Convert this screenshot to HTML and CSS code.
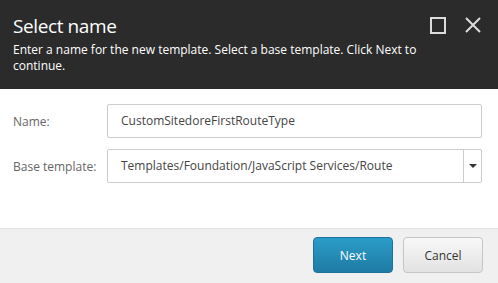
FILE: index.html
```html
<!DOCTYPE html>
<html lang="en">
<head>
    <meta charset="UTF-8">
    <title>Select name</title>
    <link rel="stylesheet" href="styles.css">
</head>
<body>
    <div class="dialog">
        <div class="dialog-header">
            <div class="header-text">
                <h1 class="title">Select name</h1>
                <p class="subtitle">Enter a name for the new template. Select a base template. Click Next to continue.</p>
            </div>
            <div class="header-tools">
                <svg class="tool" width="16" height="17" viewBox="0 0 16 17">
                    <rect x="1" y="1" width="14" height="15" fill="none" stroke="#dcdcdc" stroke-width="2"/>
                </svg>
                <svg class="tool" width="16" height="16" viewBox="0 0 16 16">
                    <path d="M1 1 L15 15 M15 1 L1 15" stroke="#dcdcdc" stroke-width="2"/>
                </svg>
            </div>
        </div>

        <div class="dialog-body">
            <div class="form-row">
                <label class="field-label">Name:</label>
                <div class="field">CustomSitedoreFirstRouteType</div>
            </div>
            <div class="form-row">
                <label class="field-label">Base template:</label>
                <div class="field combo">
                    <span class="combo-text">Templates/Foundation/JavaScript Services/Route</span>
                    <span class="combo-btn"><span class="caret"></span></span>
                </div>
            </div>
        </div>

        <div class="dialog-footer">
            <button class="btn btn-primary">Next</button>
            <button class="btn btn-default">Cancel</button>
        </div>
    </div>
</body>
</html>
```

FILE: styles.css
```css
body {
    margin: 0;
    font-family: 'Open Sans', 'Noto Sans', sans-serif;
    background-color: #fff;
}

.dialog {
    width: 498px;
    height: 283px;
    display: flex;
    flex-direction: column;
}

.dialog-header {
    background-color: #2b2b2b;
    color: #fff;
    height: 89px;
    box-sizing: border-box;
    padding: 14px 17px 0 13px;
    display: flex;
    justify-content: space-between;
}

.title {
    margin: 0;
    font-size: 19px;
    letter-spacing: -0.4px;
    font-weight: normal;
    line-height: 24px;
}

.subtitle {
    margin: 4px 0 0;
    width: 410px;
    font-size: 12px;
    line-height: 16px;
}

.header-tools {
    display: flex;
    gap: 19px;
    padding-top: 3px;
}

.tool {
    display: block;
}

.dialog-body {
    flex: 1;
    padding: 15px 16px 0 13px;
    display: flex;
    flex-direction: column;
    gap: 11px;
}

.form-row {
    display: flex;
    align-items: center;
}

.field-label {
    width: 94px;
    font-size: 12px;
    color: #666;
}

.field {
    flex: 1;
    height: 34px;
    box-sizing: border-box;
    border: 1px solid #ccc;
    border-radius: 2px;
    padding: 0 13px;
    font-size: 12px;
    color: #444;
    line-height: 32px;
}

.combo {
    display: flex;
    padding-right: 0;
}

.combo-text {
    flex: 1;
}

.combo-btn {
    width: 17px;
    border-left: 1px solid #ccc;
    display: flex;
    justify-content: center;
    align-items: center;
}

.caret {
    width: 0;
    height: 0;
    border-left: 4px solid transparent;
    border-right: 4px solid transparent;
    border-top: 4px solid #333;
}

.dialog-footer {
    border-top: 1px solid #e0e0e0;
    background-color: #f0f0f0;
    height: 55px;
    box-sizing: border-box;
    padding: 8px 15px 0 0;
    display: flex;
    justify-content: flex-end;
    align-items: flex-start;
    gap: 10px;
}

.btn {
    width: 80px;
    height: 36px;
    border-radius: 4px;
    font-family: 'Open Sans', 'Noto Sans', sans-serif;
    font-size: 12px;
    cursor: pointer;
}

.btn-primary {
    background: linear-gradient(#2b9dca, #1f7ba3);
    border: 1px solid #1d729a;
    color: #fff;
}

.btn-default {
    background: linear-gradient(#f8f8f8, #e2e2e2);
    border: 1px solid #c6c6c6;
    color: #333;
}
```
